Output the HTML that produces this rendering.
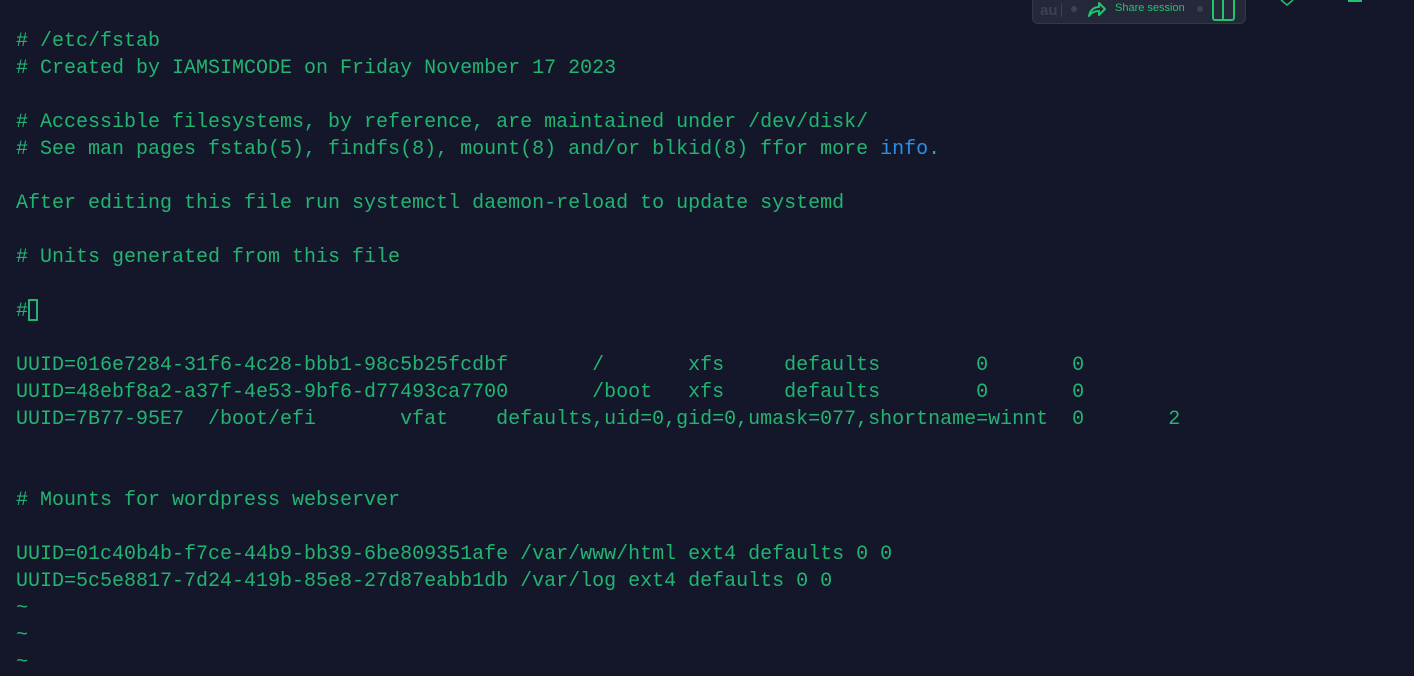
<!DOCTYPE html>
<html><head><meta charset="utf-8"><style>
html,body{margin:0;padding:0;background:#131729;width:1414px;height:673px;overflow:hidden}
pre{position:absolute;left:16px;top:28px;margin:0;font-family:"Liberation Mono",monospace;font-size:20px;line-height:27px;color:#23b472;white-space:pre}
.b{color:#2a8fe8}
.cur{display:inline-block;width:10px;height:22px;border:2px solid #23b472;box-sizing:border-box;vertical-align:-5px}
.tb{position:absolute;left:1032px;top:-6px;width:212px;height:28px;background:#252838;border:1px solid #34374b;border-radius:6px;font-family:"Liberation Sans",sans-serif}
</style></head><body>
<pre># /etc/fstab
# Created by IAMSIMCODE on Friday November 17 2023

# Accessible filesystems, by reference, are maintained under /dev/disk/
# See man pages fstab(5), findfs(8), mount(8) and/or blkid(8) ffor more <span class="b">info</span>.

After editing this file run systemctl daemon-reload to update systemd

# Units generated from this file

#<span class="cur"></span>

UUID=016e7284-31f6-4c28-bbb1-98c5b25fcdbf       /       xfs     defaults        0       0
UUID=48ebf8a2-a37f-4e53-9bf6-d77493ca7700       /boot   xfs     defaults        0       0
UUID=7B77-95E7  /boot/efi       vfat    defaults,uid=0,gid=0,umask=077,shortname=winnt  0       2


# Mounts for wordpress webserver

UUID=01c40b4b-f7ce-44b9-bb39-6be809351afe /var/www/html ext4 defaults 0 0
UUID=5c5e8817-7d24-419b-85e8-27d87eabb1db /var/log ext4 defaults 0 0
~
~
~</pre>
<div class="tb">
<span style="position:absolute;left:7px;top:7px;font-size:15px;font-weight:bold;color:#3d4155">au</span>
<span style="position:absolute;left:28px;top:8px;width:1px;height:14px;background:#3d4155"></span>
<span style="position:absolute;left:38px;top:11px;width:6px;height:6px;border-radius:3px;background:#3d4155"></span>
<svg style="position:absolute;left:53px;top:6px" width="21" height="17" viewBox="0 0 21 17"><path d="M3 15 C4 9 8 6 13 6 V2 L19 8 L13 14 V10 C9 10 6 11 3 15Z" fill="none" stroke="#22c36e" stroke-width="2" stroke-linejoin="round"/></svg>
<span style="position:absolute;left:82px;top:7px;font-size:11px;color:#22c36e">Share session</span>
<span style="position:absolute;left:164px;top:11px;width:6px;height:6px;border-radius:3px;background:#3d4155"></span>
<span style="position:absolute;left:179px;top:2px;width:19px;height:20px;border:2px solid #22c36e;border-radius:3px"></span>
<span style="position:absolute;left:189px;top:2px;width:2px;height:22px;background:#22c36e"></span>
</div>
<svg style="position:absolute;left:1280px;top:0" width="14" height="6"><path d="M1 0 L7 5 L13 0" fill="none" stroke="#22c36e" stroke-width="1.5"/></svg>
<div style="position:absolute;left:1348px;top:0;width:14px;height:2px;background:#22c36e"></div>
</body></html>
